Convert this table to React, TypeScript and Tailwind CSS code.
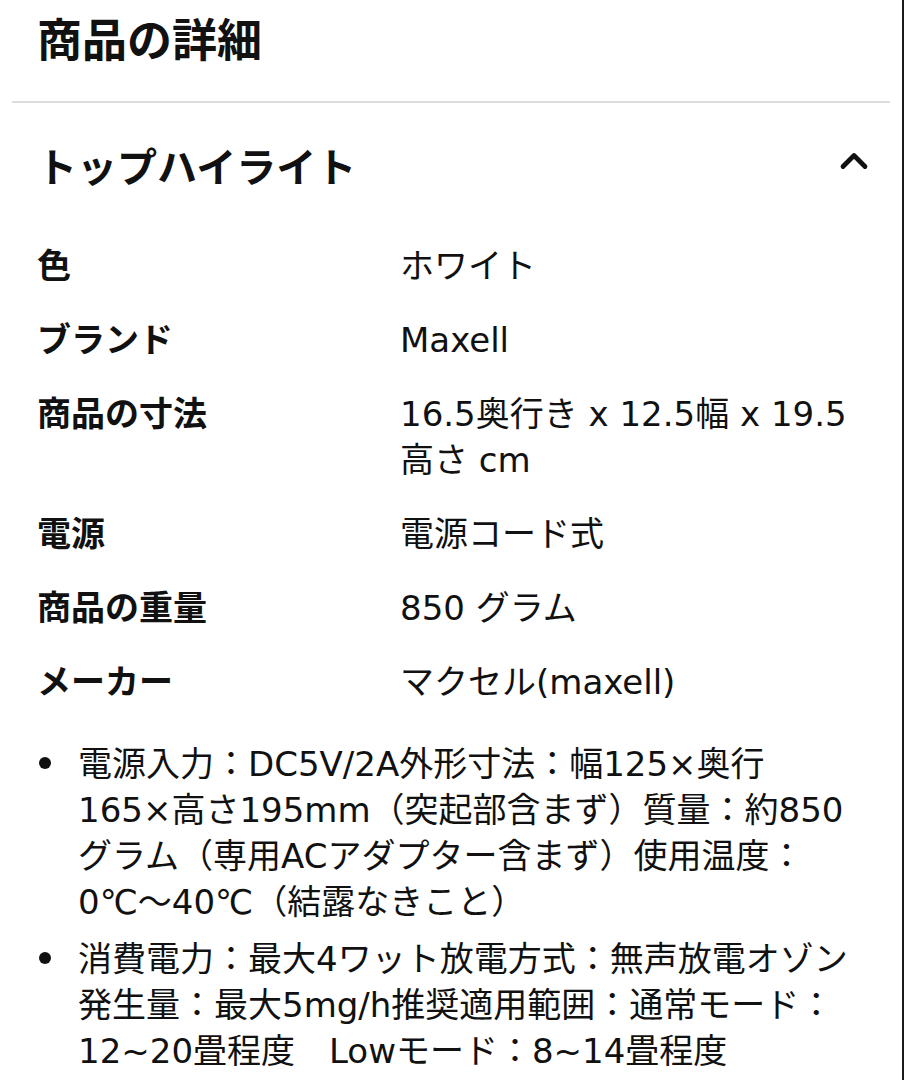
import React from "react";
import { ChevronUp } from "lucide-react";

interface SpecRow {
  label: string;
  value: string[];
}

const specs: SpecRow[] = [
  { label: "色", value: ["ホワイト"] },
  { label: "ブランド", value: ["Maxell"] },
  { label: "商品の寸法", value: ["16.5奥行き x 12.5幅 x 19.5", "高さ cm"] },
  { label: "電源", value: ["電源コード式"] },
  { label: "商品の重量", value: ["850 グラム"] },
  { label: "メーカー", value: ["マクセル(maxell)"] },
];

// explicit lines so the wrapping follows the screenshot
const bullets: string[][] = [
  [
    "電源入力：DC5V/2A外形寸法：幅125×奥行",
    "165×高さ195mm（突起部含まず）質量：約850",
    "グラム（専用ACアダプター含まず）使用温度：",
    "0℃〜40℃（結露なきこと）",
  ],
  [
    "消費電力：最大4ワット放電方式：無声放電オゾン",
    "発生量：最大5mg/h推奨適用範囲：通常モード：",
    "12~20畳程度　Lowモード：8~14畳程度",
  ],
];

export default function App() {
  return (
    <div
      className="w-[904px] h-[1080px] overflow-hidden bg-white border-r-2 border-[#1a1a1a] text-[#111111]"
      style={{ fontFamily: '"DejaVu Sans", "Noto Sans CJK JP", sans-serif' }}
    >
      {/* Title */}
      <div className="pl-[37px] pt-[19px] h-[101px]">
        <h1 className="text-[45px] leading-[45px] font-bold">商品の詳細</h1>
      </div>
      <div className="mx-[12px] h-[2px] bg-[#dcdcdc]" />

      {/* Section header */}
      <div className="mt-[45px] pl-[37px] pr-[32px] flex items-center justify-between">
        <h2 className="text-[40px] leading-[40px] font-bold">トップハイライト</h2>
        <ChevronUp className="w-[44px] h-[44px] -mr-[6px] -mt-[14px]" strokeWidth={2.6} />
      </div>

      {/* Spec rows */}
      <div className="mt-[55px] pl-[37px] flex flex-col gap-[28px]">
        {specs.map((row) => (
          <div key={row.label} className="grid grid-cols-[363px_1fr] text-[34px] leading-[46px]">
            <div className="font-bold">{row.label}</div>
            <div>
              {row.value.map((line) => (
                <div key={line} className="whitespace-nowrap">{line}</div>
              ))}
            </div>
          </div>
        ))}
      </div>

      {/* Bullets */}
      <ul className="mt-[36px] pl-[37px] flex flex-col gap-[11px]">
        {bullets.map((lines, i) => (
          <li key={i} className="flex text-[34px] leading-[46px]">
            <span className="w-[41px] shrink-0 flex items-start pt-[16px]">
              <span className="block w-[12px] h-[12px] rounded-full bg-[#111111] ml-[2px]" />
            </span>
            <div>
              {lines.map((line) => (
                <div key={line} className="whitespace-nowrap">{line}</div>
              ))}
            </div>
          </li>
        ))}
      </ul>
    </div>
  );
}
